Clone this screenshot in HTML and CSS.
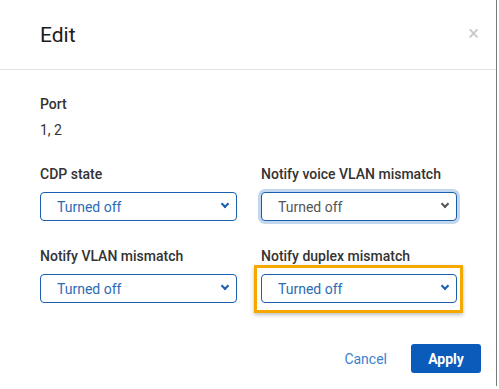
FILE: index.html
```html
<!DOCTYPE html>
<html lang="en">
<head>
    <meta charset="UTF-8">
    <meta name="viewport" content="width=device-width, initial-scale=1.0">
    <title>Edit</title>
    <link rel="stylesheet" href="styles.css">
</head>
<body>

    <div class="dialog">
        <div class="dialog-header">
            <h2>Edit</h2>
            <span class="close-btn">&times;</span>
        </div>

        <div class="dialog-body">
            <div class="field">
                <div class="field-label">Port</div>
                <div class="field-value">1, 2</div>
            </div>

            <div class="grid">
                <div class="field">
                    <label class="field-label" for="cdp">CDP state</label>
                    <div class="select-wrap">
                        <select id="cdp"><option>Turned off</option></select>
                    </div>
                </div>
                <div class="field">
                    <label class="field-label" for="voice">Notify voice VLAN mismatch</label>
                    <div class="select-wrap focused">
                        <select id="voice"><option>Turned off</option></select>
                    </div>
                </div>
                <div class="field">
                    <label class="field-label" for="vlan">Notify VLAN mismatch</label>
                    <div class="select-wrap">
                        <select id="vlan"><option>Turned off</option></select>
                    </div>
                </div>
                <div class="field">
                    <label class="field-label" for="duplex">Notify duplex mismatch</label>
                    <div class="select-wrap highlighted">
                        <select id="duplex"><option>Turned off</option></select>
                    </div>
                </div>
            </div>
        </div>

        <div class="dialog-footer">
            <button class="cancel-btn">Cancel</button>
            <button class="apply-btn">Apply</button>
        </div>
    </div>

</body>
</html>
```

FILE: styles.css
```css
body {
    font-family: 'Roboto', 'Liberation Sans', sans-serif;
    margin: 0;
    padding: 0;
    background-color: #fff;
}

.dialog {
    width: 496px;
    height: 386px;
    border-right: 1px solid #7a7a7a;
    background-color: #fff;
    position: relative;
}

.dialog-header {
    height: 69px;
    border-bottom: 1px solid #e3e3e3;
    display: flex;
    align-items: center;
    justify-content: space-between;
    padding: 0 17px 0 40px;
}

.dialog-header h2 {
    margin: 0;
    font-size: 21px;
    font-weight: 400;
    color: #1b1b1b;
}

.close-btn {
    color: #c8c8c8;
    font-size: 20px;
    line-height: 1;
    margin-top: -3px;
}

.dialog-body {
    padding: 26px 40px 0 40px;
}

.field-label {
    display: block;
    font-size: 14px;
    font-weight: 500;
    color: #333;
    line-height: 16px;
}

.field-value {
    margin-top: 10px;
    font-size: 14px;
    color: #333;
    line-height: 16px;
}

.grid {
    display: grid;
    grid-template-columns: 197px 196px;
    column-gap: 24px;
    row-gap: 27px;
    margin-top: 28px;
}

.grid .field-label {
    margin-bottom: 10px;
}

.select-wrap {
    position: relative;
}

.select-wrap select {
    width: 100%;
    height: 29px;
    appearance: none;
    border: 1px solid #1a5fae;
    border-radius: 4px;
    background-color: #fff;
    color: #2b6cb5;
    font-family: inherit;
    font-size: 14px;
    padding: 0 30px 0 16px;
    margin: 0;
    outline: none;
}

.select-wrap::after {
    content: "";
    position: absolute;
    right: 9px;
    top: 9px;
    width: 4px;
    height: 4px;
    border-right: 2px solid #1a5fae;
    border-bottom: 2px solid #1a5fae;
    transform: rotate(45deg);
    pointer-events: none;
}

.focused select {
    color: #555;
    box-shadow: 0 0 0 3px #c3d7ee;
}

.focused::after {
    border-color: #555;
}

.highlighted::before {
    content: "";
    position: absolute;
    left: -7px;
    right: -6px;
    top: -9px;
    bottom: -10px;
    border: 3px solid #f5a800;
    box-shadow: 0 2px 4px rgba(0, 0, 0, 0.25);
    pointer-events: none;
}

.dialog-footer {
    position: absolute;
    right: 15px;
    bottom: 13px;
    display: flex;
    align-items: center;
    gap: 24px;
}

.cancel-btn {
    background: none;
    border: none;
    color: #3a82d0;
    font-family: inherit;
    font-size: 14px;
    padding: 0;
}

.apply-btn {
    width: 70px;
    height: 29px;
    background-color: #0b5cba;
    color: #fff;
    border: none;
    border-radius: 3px;
    font-family: inherit;
    font-size: 14px;
    font-weight: 700;
}
```
